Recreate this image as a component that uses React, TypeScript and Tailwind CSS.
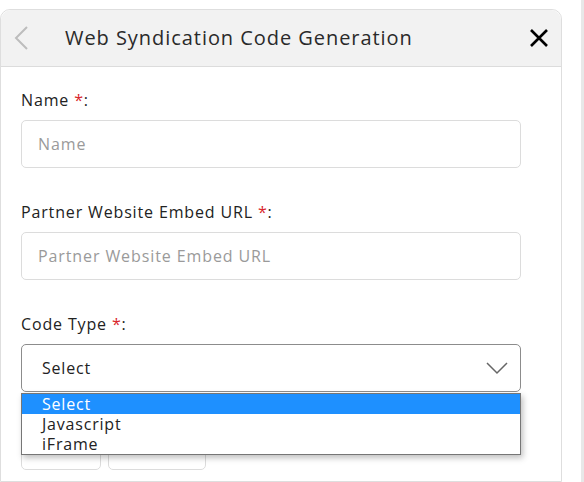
import { useState } from "react";

const font = { fontFamily: '"Open Sans", "Liberation Sans", sans-serif' };

function Label({ text }: { text: string }) {
  return (
    <label className="block text-[16px] leading-[22px] tracking-[0.85px] text-[#222] mb-[9px]">
      {text} <span className="text-[#d9262b]">*</span>:
    </label>
  );
}

function TextField({ placeholder }: { placeholder: string }) {
  return (
    <input
      placeholder={placeholder}
      className="w-full h-[48px] border border-[#dcdcdc] rounded-[5px] px-[16px] text-[16px] tracking-[0.9px] text-[#333] placeholder:text-[#9a9a9a] outline-none"
    />
  );
}

export default function App() {
  const [options] = useState(["Select", "Javascript", "iFrame"]);

  return (
    <div className="flex h-screen bg-white overflow-hidden" style={font}>
      <div className="w-[562px] mt-[9px] border border-[#dedede] rounded-t-[10px] flex flex-col">
        <div className="h-[57px] bg-[#f2f2f2] border-b border-[#dcdcdc] rounded-t-[10px] flex items-center pl-[10px] pr-[11px]">
          <svg width="20" height="26" viewBox="0 0 20 26" className="shrink-0">
            <path d="M16 2 L5 13 L16 24" fill="none" stroke="#bdbdbd" strokeWidth="2" />
          </svg>
          <h1 className="ml-[34px] text-[20px] tracking-[0.95px] text-[#2a2a2a] flex-1">
            Web Syndication Code Generation
          </h1>
          <svg width="22" height="22" viewBox="0 0 22 22" className="shrink-0">
            <path d="M3 3 L19 19 M19 3 L3 19" fill="none" stroke="#000" strokeWidth="2.6" />
          </svg>
        </div>

        <div className="relative pl-[20px] pr-[40px] pt-[22px]">
          <Label text="Name" />
          <TextField placeholder="Name" />

          <div className="mt-[33px]">
            <Label text="Partner Website Embed URL" />
            <TextField placeholder="Partner Website Embed URL" />
          </div>

          <div className="mt-[33px]">
            <Label text="Code Type" />
            <div className="relative">
              <div className="h-[48px] border border-[#8c8c8c] rounded-[5px] flex items-center justify-between pl-[20px] pr-[12px] text-[16px] tracking-[0.8px] text-[#222]">
                <span>Select</span>
                <svg width="22" height="14" viewBox="0 0 22 14">
                  <path d="M1 2 L11 12 L21 2" fill="none" stroke="#666" strokeWidth="1.5" />
                </svg>
              </div>
              <div className="absolute left-0 top-[49px] w-[500px] bg-white border border-[#767676] shadow-[2px_3px_6px_rgba(0,0,0,0.25)] z-10">
                {options.map((o, i) => (
                  <div
                    key={o}
                    className={`h-[20px] leading-[20px] pl-[20px] text-[16px] tracking-[0.8px] ${
                      i === 0 ? "bg-[#1e90ff] text-white" : "text-[#222]"
                    }`}
                  >
                    {o}
                  </div>
                ))}
              </div>
            </div>
          </div>

          <div className="flex gap-[7px] mt-[40px]">
            <div className="w-[80px] h-[38px] border border-[#dcdcdc] rounded-[5px]" />
            <div className="w-[98px] h-[38px] border border-[#dcdcdc] rounded-[5px]" />
          </div>
        </div>
      </div>
      <div className="ml-[19px] w-[3px] h-full bg-[#e8e8e8]" />
    </div>
  );
}
